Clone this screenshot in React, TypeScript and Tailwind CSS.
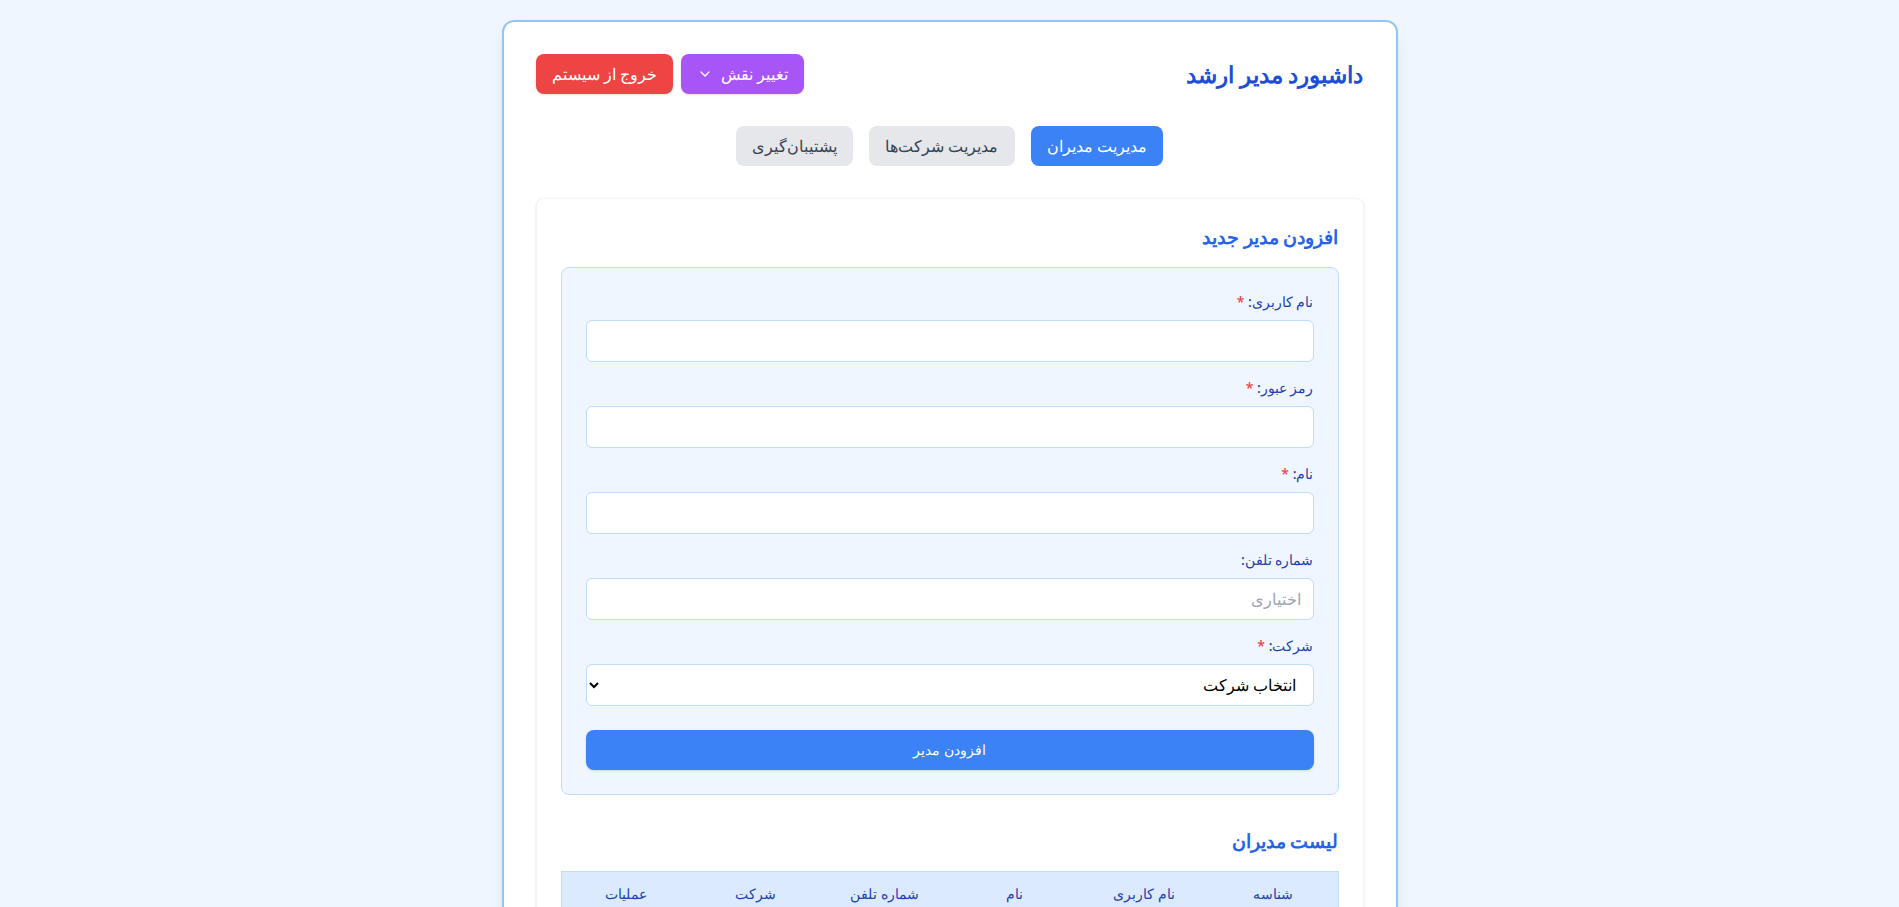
import { ChevronDown } from "lucide-react";

function Field({ label, required, placeholder }: { label: string; required?: boolean; placeholder?: string }) {
  return (
    <div>
      <label className="block text-sm font-medium text-[#1e40af] mb-2">
        {label} {required && <span className="text-[#ef4444]">*</span>}
      </label>
      <input
        type="text"
        placeholder={placeholder}
        className="w-full px-3 py-2 bg-white border border-[#bfdbfe] rounded-md text-right placeholder:text-[#9ca3af] focus:outline-none"
      />
    </div>
  );
}

export default function App() {
  const columns = ["شناسه", "نام کاربری", "نام", "شماره تلفن", "شرکت", "عملیات"];

  return (
    <div dir="rtl" className="min-h-screen bg-[#eff6ff] py-5">
      <div className="max-w-4xl mx-auto bg-white border-2 border-[#93c5fd] rounded-xl shadow-lg p-8">
        {/* Header */}
        <div className="flex items-center justify-between mb-8">
          <h1 className="text-[23px] leading-8 font-bold text-[#1d4ed8]">داشبورد مدیر ارشد</h1>
          <div className="flex gap-2">
            <button className="flex items-center gap-2 bg-[#a855f7] text-white px-4 py-2 rounded-lg shadow-sm">
              تغییر نقش
              <ChevronDown className="h-4 w-4" />
            </button>
            <button className="bg-[#ef4444] text-white px-4 py-2 rounded-lg shadow-sm">خروج از سیستم</button>
          </div>
        </div>

        {/* Tabs */}
        <div className="flex justify-center gap-4 mb-8">
          <button className="bg-[#3b82f6] text-white px-4 py-2 rounded-lg">مدیریت مدیران</button>
          <button className="bg-[#e5e7eb] text-[#374151] px-4 py-2 rounded-lg">مدیریت شرکت‌ها</button>
          <button className="bg-[#e5e7eb] text-[#374151] px-4 py-2 rounded-lg">پشتیبان‌گیری</button>
        </div>

        {/* Managers section */}
        <div className="bg-white border border-[#f3f4f6] rounded-lg shadow-sm p-6">
          <h2 className="text-[19px] leading-7 font-semibold text-[#2563eb] mb-4">افزودن مدیر جدید</h2>
          <form className="bg-[#eff6ff] border border-[#bfdbfe] rounded-lg p-6 space-y-4 mb-8">
            <Field label="نام کاربری:" required />
            <Field label="رمز عبور:" required />
            <Field label="نام:" required />
            <Field label="شماره تلفن:" placeholder="اختیاری" />
            <div>
              <label className="block text-sm font-medium text-[#1e40af] mb-2">
                شرکت: <span className="text-[#ef4444]">*</span>
              </label>
              <select className="w-full px-3 py-2 bg-white border border-[#bfdbfe] rounded-md text-black">
                <option>انتخاب شرکت</option>
              </select>
            </div>
            <div className="pt-2">
              <button type="button" className="w-full bg-[#3b82f6] text-white text-sm py-2.5 rounded-lg shadow-sm">
                افزودن مدیر
              </button>
            </div>
          </form>

          <h2 className="text-[19px] leading-7 font-semibold text-[#2563eb] mb-4">لیست مدیران</h2>
          <table className="w-full table-fixed border border-[#bfdbfe]">
            <thead className="bg-[#dbeafe]">
              <tr>
                {columns.map((c) => (
                  <th key={c} className="px-4 py-3 text-sm font-medium text-[#1e40af] text-center">
                    {c}
                  </th>
                ))}
              </tr>
            </thead>
            <tbody>
              <tr>
                <td colSpan={6} className="px-4 py-6 text-center text-[#6b7280]">
                  مدیری یافت نشد
                </td>
              </tr>
            </tbody>
          </table>
        </div>
      </div>
    </div>
  );
}
